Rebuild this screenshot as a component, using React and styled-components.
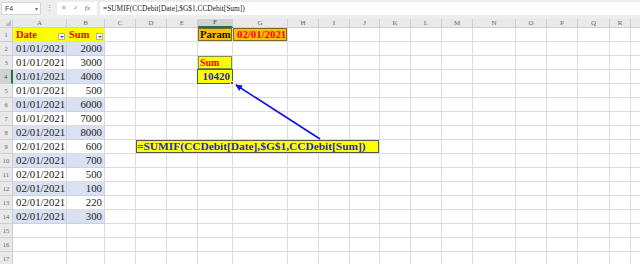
import React from 'react';
import styled, { createGlobalStyle } from 'styled-components';

const Global = createGlobalStyle`
  html, body { margin: 0; padding: 0; background: #fff; }
  body { width: 640px; height: 264px; overflow: hidden; font-family: "Liberation Serif", serif; }
`;

const COLS = [
  ['A', 54], ['B', 38], ['C', 31], ['D', 31], ['E', 31], ['F', 35], ['G', 55],
  ['H', 31], ['I', 31], ['J', 30], ['K', 31], ['L', 31], ['M', 31], ['N', 43],
  ['O', 31], ['P', 31], ['Q', 32], ['R', 21], ['', 31],
];
const ROWS = 17;
const SEL_COL = 'F';
const SEL_ROW = 4;

const Page = styled.div`
  position: relative;
  width: 640px;
  height: 264px;
  overflow: hidden;
  background: #fff;
`;

const FormulaBar = styled.div`
  display: flex;
  align-items: center;
  height: 19px;
  padding: 0 0 3px 1px;
  box-sizing: border-box;
  background: #ededed;
`;

const NameBox = styled.div`
  width: 40px;
  height: 13px;
  box-sizing: border-box;
  background: #fff;
  border: 1px solid #d6d6d6;
  display: flex;
  align-items: center;
  justify-content: space-between;
  padding: 0 2px 0 3px;
  font: 7px "Liberation Sans", sans-serif;
  color: #444;
`;

const Caret = styled.span`
  font-size: 6px;
  color: #777;
`;

const Dots = styled.span`
  width: 16px;
  text-align: center;
  font: 7px "Liberation Sans", sans-serif;
  color: #9a9a9a;
`;

const Tools = styled.div`
  display: flex;
  align-items: center;
  gap: 6px;
  width: 40px;
  height: 13px;
  background: #fff;
  padding-left: 4px;
  box-sizing: border-box;
  font: 7px "Liberation Sans", sans-serif;
  color: #a0a0a0;
`;

const FxText = styled.span`
  font-family: "Liberation Serif", serif;
  font-style: italic;
  font-size: 7px;
  color: #666;
`;

const FormulaInput = styled.div`
  flex: 1;
  height: 13px;
  margin-left: 3px;
  background: #fff;
  display: flex;
  align-items: center;
  padding-left: 3px;
  font: 7.4px "Liberation Serif", serif;
  color: #222;
  white-space: nowrap;
`;

const Sheet = styled.div`
  display: grid;
  grid-template-columns: 13px ${COLS.map(c => c[1] + 'px').join(' ')};
  grid-template-rows: 9px repeat(${ROWS}, 14px);
`;

const Corner = styled.div`
  background: #e9e9e9;
  border-right: 1px solid #cfcfcf;
  border-bottom: 1px solid #cfcfcf;
  box-sizing: border-box;
  position: relative;
  &::after {
    content: '';
    position: absolute;
    right: 1px;
    bottom: 1px;
    border-left: 6px solid transparent;
    border-bottom: 6px solid #bdbdbd;
  }
`;

const ColHead = styled.div`
  background: ${p => (p.$sel ? '#d2d2d2' : '#e9e9e9')};
  border-right: 1px solid #cfcfcf;
  border-bottom: ${p => (p.$sel ? '2px solid #217346' : '1px solid #cfcfcf')};
  box-sizing: border-box;
  display: flex;
  align-items: center;
  justify-content: center;
  font: 7px "Liberation Serif", serif;
  color: ${p => (p.$sel ? '#2a5d3c' : '#666')};
  line-height: 1;
`;

const RowHead = styled.div`
  background: ${p => (p.$sel ? '#d2d2d2' : '#e9e9e9')};
  border-right: ${p => (p.$sel ? '2px solid #217346' : '1px solid #cfcfcf')};
  border-bottom: 1px solid #cfcfcf;
  box-sizing: border-box;
  display: flex;
  align-items: center;
  justify-content: center;
  font: 6.5px "Liberation Serif", serif;
  color: ${p => (p.$sel ? '#2a5d3c' : '#666')};
`;

const Cell = styled.div`
  position: relative;
  box-sizing: border-box;
  background: ${p => p.$bg || '#fff'};
  border-right: 1px solid ${p => p.$line || '#dcdcdc'};
  border-bottom: 1px solid ${p => p.$line || '#dcdcdc'};
  box-shadow: ${p => (p.$frame ? `inset 0 0 0 1px ${p.$frame}` : 'none')};
  display: flex;
  align-items: flex-end;
  justify-content: ${p => (p.$align === 'right' ? 'flex-end' : 'space-between')};
  padding: 0 ${p => (p.$align === 'right' ? '2px' : '1px')} 0 ${p => p.$indent ?? 3}px;
  font-family: "Liberation Serif", serif;
  font-size: ${p => p.$size || 10.8}px;
  font-weight: ${p => (p.$bold ? 700 : 400)};
  color: ${p => p.$color || '#222'};
  line-height: 13px;
  white-space: nowrap;
  grid-column: ${p => (p.$span ? `span ${p.$span}` : 'auto')};
`;

const Filter = styled.span`
  width: 7px;
  height: 7px;
  margin-bottom: 1px;
  box-sizing: border-box;
  background: #fafafa;
  border: 1px solid #b4b4b4;
  display: flex;
  align-items: center;
  justify-content: center;
  &::after {
    content: '';
    border-left: 2px solid transparent;
    border-right: 2px solid transparent;
    border-top: 2px solid #555;
  }
`;

const SelectFrame = styled.span`
  position: absolute;
  inset: -1px -1px -1px -1px;
  border: 1.5px solid #217346;
  pointer-events: none;
  &::after {
    content: '';
    position: absolute;
    right: -3px;
    bottom: -3px;
    width: 3px;
    height: 3px;
    background: #217346;
    border: 1px solid #fff;
  }
`;

const Arrow = styled.svg`
  position: absolute;
  left: 0;
  top: 0;
  pointer-events: none;
`;

const BLUE = '#d9e1f2';
const YELLOW = '#ffff00';
const ORANGE = '#ffc000';

const dataRows = [
  ['01/01/2021', '2000'], ['01/01/2021', '3000'], ['01/01/2021', '4000'],
  ['01/01/2021', '500'], ['01/01/2021', '6000'], ['01/01/2021', '7000'],
  ['02/01/2021', '8000'], ['02/01/2021', '600'], ['02/01/2021', '700'],
  ['02/01/2021', '500'], ['02/01/2021', '100'], ['02/01/2021', '220'],
  ['02/01/2021', '300'],
];

const cells = {
  A1: { text: 'Date', bg: YELLOW, color: '#ff0000', bold: true, filter: true, size: 10.5 },
  B1: { text: 'Sum', bg: YELLOW, color: '#ff0000', bold: true, filter: true, size: 10.5, indent: 2 },
  F1: { text: 'Param', bg: ORANGE, color: '#111', bold: true, frame: '#7a6a30', size: 10.6, indent: 2 },
  G1: { text: '02/01/2021', bg: ORANGE, color: '#ff0000', bold: true, frame: '#7a6a30', size: 10.8, indent: 4 },
  F3: { text: 'Sum', bg: YELLOW, color: '#ff0000', bold: true, frame: '#8a8a50', size: 10, indent: 2 },
  F4: { text: '10420', bg: YELLOW, color: '#2727c8', bold: true, size: 11, align: 'right', selected: true },
  D9: { text: '=SUMIF(CCDebit[Date],$G$1,CCDebit[Sum])', bg: YELLOW, color: '#1f2ad0', bold: true, span: 7, frame: '#555', size: 11.4, indent: 1 },
};
dataRows.forEach(([d, s], i) => {
  const r = i + 2;
  const bg = r % 2 === 0 ? BLUE : '#fff';
  cells['A' + r] = { text: d, bg, line: r % 2 === 0 ? '#c9d1e3' : undefined };
  cells['B' + r] = { text: s, bg, align: 'right', line: r % 2 === 0 ? '#c9d1e3' : undefined };
});

export default function App() {
  const grid = [];
  grid.push(<Corner key="corner" />);
  COLS.forEach(([c], i) => grid.push(<ColHead key={'h' + i} $sel={c === SEL_COL}>{c}</ColHead>));
  for (let r = 1; r <= ROWS; r++) {
    grid.push(<RowHead key={'r' + r} $sel={r === SEL_ROW}>{r}</RowHead>);
    let skip = 0;
    COLS.forEach(([c], i) => {
      if (skip > 0) { skip--; return; }
      const d = cells[c + r];
      if (!c || !d) {
        grid.push(<Cell key={'c' + i + '-' + r} />);
        return;
      }
      if (d.span) skip = d.span - 1;
      grid.push(
        <Cell
          key={'c' + i + '-' + r}
          $bg={d.bg}
          $color={d.color}
          $bold={d.bold}
          $align={d.align}
          $span={d.span}
          $frame={d.frame}
          $size={d.size}
          $indent={d.indent}
          $line={d.line}
        >
          <span>{d.text}</span>
          {d.filter && <Filter />}
          {d.selected && <SelectFrame />}
        </Cell>
      );
    });
  }

  return (
    <Page>
      <Global />
      <FormulaBar>
        <NameBox>F4<Caret>▾</Caret></NameBox>
        <Dots>⋮</Dots>
        <Tools>
          <span>✕</span>
          <span>✓</span>
          <FxText>fx</FxText>
        </Tools>
        <FormulaInput>=SUMIF(CCDebit[Date],$G$1,CCDebit[Sum])</FormulaInput>
      </FormulaBar>
      <Sheet>{grid}</Sheet>
      <Arrow width="640" height="264" viewBox="0 0 640 264">
        <defs>
          <marker id="ah" markerWidth="8" markerHeight="8" refX="6" refY="4" orient="auto" markerUnits="userSpaceOnUse">
            <path d="M0,0.8 L7,4 L0,7.2 Z" fill="#1010e0" />
          </marker>
        </defs>
        <line x1="320" y1="139" x2="236" y2="85" stroke="#1010e0" strokeWidth="1.6" markerEnd="url(#ah)" />
      </Arrow>
    </Page>
  );
}
